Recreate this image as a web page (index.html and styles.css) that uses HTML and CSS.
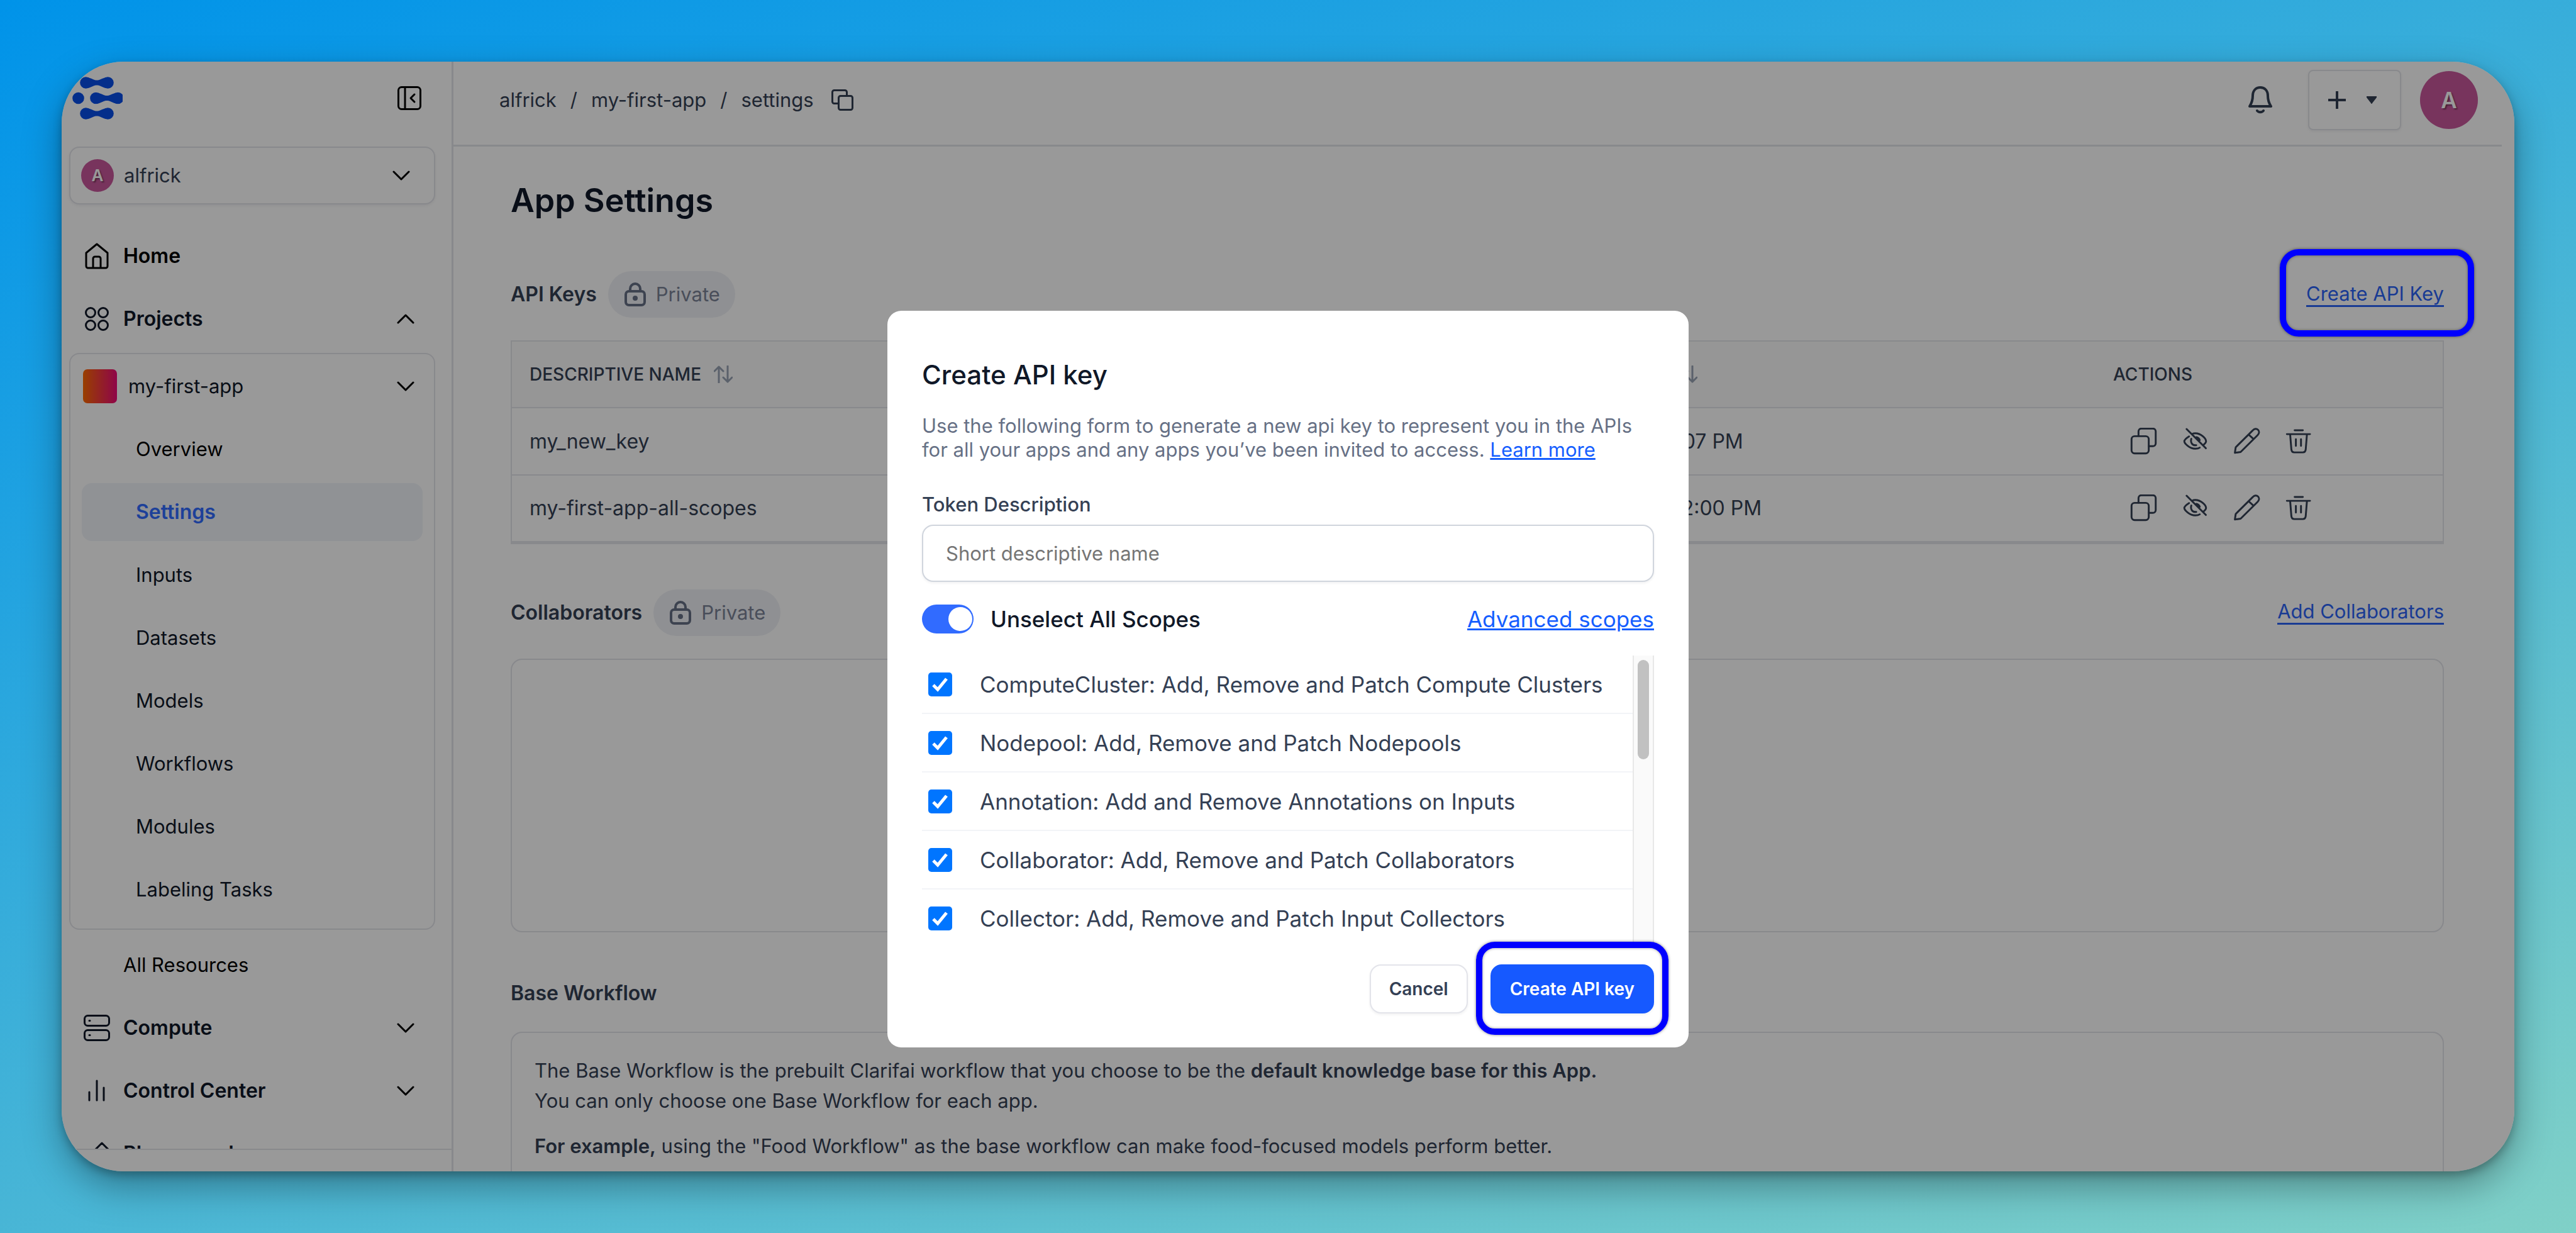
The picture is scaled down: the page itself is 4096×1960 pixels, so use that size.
FILE: index.html
```html
<!DOCTYPE html>
<html lang="en">
<head>
<meta charset="utf-8">
<meta name="viewport" content="width=device-width, initial-scale=1">
<title>App Settings</title>
<link rel="stylesheet" href="styles.css">
</head>
<body>
<svg class="sprite" aria-hidden="true">
  <symbol id="i-down" viewBox="0 0 28 16"><path d="M2 2l12 12L26 2"/></symbol>
  <symbol id="i-up" viewBox="0 0 28 16"><path d="M2 14L14 2l12 12"/></symbol>
  <symbol id="i-lock" viewBox="0 0 34 40"><rect x="2" y="15" width="30" height="22" rx="5"/><path d="M9 14v-3a8 8 0 0 1 16 0v3"/><circle cx="17" cy="26" r="2"/></symbol>
  <symbol id="i-sort" viewBox="0 0 30 28"><path d="M8 27V2M1 9l7-7 7 7M22 1v25M15 19l7 7 7-7"/></symbol>
  <symbol id="i-copy" viewBox="0 0 132 132"><rect x="7" y="41" width="84" height="84" rx="15"/><path d="M41 40V18a14 14 0 0 1 14-14h56a14 14 0 0 1 14 14v58a14 14 0 0 1-14 14H92"/></symbol>
  <symbol id="i-hide" viewBox="0 0 132 132"><path d="M24 6l94 94M36 42C20 52 13 61 13 66c0 10 25 36 53 36 8 0 16-1 22-5M52 30c4-2 8-3 14-3 30 0 53 27 53 39 0 6-7 13-13 18M47 54c-5 17 4 34 24 31M72 46c8 2 14 8 16 14"/></symbol>
  <symbol id="i-edit" viewBox="0 0 132 132"><path d="M8 122l4-27L96 12c7-8 18-9 25-2s6 18-2 26L36 118zM75 33l24 22"/></symbol>
  <symbol id="i-trash" viewBox="0 0 132 132"><path d="M48 12h40M10 31h113M26 32l6 74c1 8 6 14 14 14h42c8 0 13-6 14-14l6-74M54 56v32M79 56v32"/></symbol>
  <symbol id="i-dumbbell" viewBox="0 0 54 19"><circle cx="9.500" cy="9.500" r="9.300"/><circle cx="44.500" cy="9.500" r="9.300"/><path d="M13 .9c8 2.600 9.500 4.600 14 4.600s6-2 14-4.600v17.200c-8-2.600-9.500-4.600-14-4.600s-6 2-14 4.600z"/></symbol>
</svg>

<div class="window">
  <aside class="sidebar">
    <div class="sidebar-head">
      <svg class="logo" viewBox="0 0 80 68" role="img" aria-label="Clarifai">
        <use href="#i-dumbbell" x="12" y="0" width="54" height="19"/>
        <circle cx="9.500" cy="34" r="9.300"/>
        <use href="#i-dumbbell" x="28" y="24.500" width="54" height="19"/>
        <use href="#i-dumbbell" x="12" y="49" width="54" height="19"/>
      </svg>
      <button class="plain" type="button" aria-label="Collapse sidebar">
        <svg class="collapse" viewBox="0 0 38 38"><rect x="1.500" y="1.500" width="35" height="35" rx="5"/><path d="M12 2v34M27 13l-6 6 6 6"/></svg>
      </button>
    </div>
    <button class="account" type="button">
      <span class="avatar avatar-small">A</span>
      <span class="grow">alfrick</span>
      <svg class="chevron"><use href="#i-down"/></svg>
    </button>
    <nav class="nav">
      <a class="nav-row strong black" href="#">
        <svg class="nav-icon" viewBox="0 0 42 42"><path d="M21 2L4 16v21a3 3 0 0 0 3 3h28a3 3 0 0 0 3-3V16zM15 40V25a3 3 0 0 1 3-3h6a3 3 0 0 1 3 3v15"/></svg>
        <span class="grow">Home</span>
      </a>
      <a class="nav-row strong" href="#">
        <svg class="nav-icon" viewBox="0 0 42 42"><circle cx="11" cy="11" r="7.500"/><circle cx="31" cy="11" r="7.500"/><circle cx="11" cy="31" r="7.500"/><circle cx="31" cy="31" r="7.500"/></svg>
        <span class="grow">Projects</span>
        <svg class="chevron"><use href="#i-up"/></svg>
      </a>
      <div class="group">
        <a class="group-head" href="#">
          <span class="swatch"></span>
          <span class="grow">my-first-app</span>
          <svg class="chevron"><use href="#i-down"/></svg>
        </a>
        <a class="sub black" href="#">Overview</a>
        <a class="sub active" href="#" aria-current="page">Settings</a>
        <a class="sub" href="#">Inputs</a>
        <a class="sub" href="#">Datasets</a>
        <a class="sub" href="#">Models</a>
        <a class="sub" href="#">Workflows</a>
        <a class="sub" href="#">Modules</a>
        <a class="sub" href="#">Labeling Tasks</a>
      </div>
      <a class="nav-row indent black" href="#">All Resources</a>
      <a class="nav-row strong" href="#">
        <svg class="nav-icon" viewBox="0 0 42 42"><rect x="1.500" y="1.500" width="39" height="16" rx="5"/><rect x="1.500" y="24.500" width="39" height="16" rx="5"/><path d="M9 9.500h1M9 32.500h1"/></svg>
        <span class="grow">Compute</span>
        <svg class="chevron"><use href="#i-down"/></svg>
      </a>
      <a class="nav-row strong" href="#">
        <svg class="nav-icon" viewBox="0 0 42 42"><path d="M9 23v13M21 5v31M32 16v20"/></svg>
        <span class="grow">Control Center</span>
        <svg class="chevron"><use href="#i-down"/></svg>
      </a>
      <a class="nav-row strong" href="#">
        <svg class="nav-icon" viewBox="0 0 42 42"><path d="M29 4L16 17v20h26V17z"/></svg>
        <span class="grow">Playground</span>
      </a>
    </nav>
    <div class="sidebar-foot"></div>
  </aside>

  <div class="main">
    <header class="topbar">
      <nav class="crumbs" aria-label="Breadcrumb">
        <a href="#">alfrick</a><span>/</span><a href="#">my-first-app</a><span>/</span><a href="#">settings</a>
        <button class="plain" type="button" aria-label="Copy path">
          <svg class="crumb-copy" viewBox="0 0 36 34"><rect x="11.500" y="10.500" width="22" height="22" rx="3"/><path d="M11 22.500H4.500a3 3 0 0 1-3-3v-15a3 3 0 0 1 3-3h17a3 3 0 0 1 3 3V10"/></svg>
        </button>
      </nav>
      <div class="tools">
        <button class="plain" type="button" aria-label="Notifications">
          <svg class="bell" viewBox="0 0 38 44"><path d="M2 32C6 26 7 20 7 15 7 7 12 2 19 2s12 5 12 13c0 5 1 11 5 17zM14 39c2 3 8 3 10 0"/></svg>
        </button>
        <button class="add" type="button" aria-label="Create new">
          <svg class="plus" viewBox="0 0 28 28"><path d="M14 0v28M0 14h28"/></svg>
          <svg class="caret" viewBox="0 0 16 12"><path d="M1 0h14a1 1 0 0 1 1 2L9 11a1 1 0 0 1-2 0L0 2a1 1 0 0 1 1-2z"/></svg>
        </button>
        <button class="avatar avatar-large" type="button" aria-label="Account">A</button>
      </div>
    </header>

    <main class="content">
      <h1>App Settings</h1>

      <section>
        <div class="section-head">
          <h2>API Keys</h2>
          <span class="pill"><svg class="lock"><use href="#i-lock"/></svg>Private</span>
          <span class="link-wrap"><a class="link" href="#">Create API Key</a><span class="marker marker-link"></span></span>
        </div>
        <table class="keys">
          <colgroup><col class="c-name"><col class="c-key"><col class="c-time"><col class="c-actions"></colgroup>
          <thead>
            <tr>
              <th scope="col">DESCRIPTIVE NAME<svg class="sort"><use href="#i-sort"/></svg></th>
              <th scope="col" aria-label="Key"></th>
              <th scope="col" aria-label="Created at"><svg class="sort sort-only"><use href="#i-sort"/></svg></th>
              <th scope="col">ACTIONS</th>
            </tr>
          </thead>
          <tbody>
            <tr>
              <td>my_new_key</td><td></td><td>1:07 PM</td>
              <td><div class="actions">
                <button class="plain" type="button" aria-label="Copy"><svg><use href="#i-copy"/></svg></button>
                <button class="plain" type="button" aria-label="Hide"><svg><use href="#i-hide"/></svg></button>
                <button class="plain" type="button" aria-label="Edit"><svg><use href="#i-edit"/></svg></button>
                <button class="plain" type="button" aria-label="Delete"><svg><use href="#i-trash"/></svg></button>
              </div></td>
            </tr>
            <tr>
              <td>my-first-app-all-scopes</td><td></td><td>02:00 PM</td>
              <td><div class="actions">
                <button class="plain" type="button" aria-label="Copy"><svg><use href="#i-copy"/></svg></button>
                <button class="plain" type="button" aria-label="Hide"><svg><use href="#i-hide"/></svg></button>
                <button class="plain" type="button" aria-label="Edit"><svg><use href="#i-edit"/></svg></button>
                <button class="plain" type="button" aria-label="Delete"><svg><use href="#i-trash"/></svg></button>
              </div></td>
            </tr>
          </tbody>
        </table>
      </section>

      <section>
        <div class="section-head">
          <h2>Collaborators</h2>
          <span class="pill"><svg class="lock"><use href="#i-lock"/></svg>Private</span>
          <span class="link-wrap"><a class="link" href="#">Add Collaborators</a></span>
        </div>
        <div class="card card-empty"></div>
      </section>

      <section>
        <div class="section-head"><h2>Base Workflow</h2></div>
        <div class="card card-text">
          <p>The Base Workflow is the prebuilt Clarifai workflow that you choose to be the <b>default knowledge base for this App.</b><br>You can only choose one Base Workflow for each app.</p>
          <p><b>For example,</b> using the "Food Workflow" as the base workflow can make food-focused models perform better.</p>
        </div>
      </section>
    </main>
  </div>

  <div class="overlay">
    <form class="modal" role="dialog" aria-modal="true" aria-labelledby="modal-title">
      <h2 id="modal-title">Create API key</h2>
      <p class="modal-text">Use the following form to generate a new api key to represent you in the APIs for all your apps and any apps you’ve been invited to access. <a href="#">Learn more</a></p>
      <label class="field-label" for="desc">Token Description</label>
      <input class="field" id="desc" type="text" placeholder="Short descriptive name">
      <div class="scope-head">
        <input class="switch" id="all" type="checkbox" role="switch" checked>
        <label class="grow" for="all">Unselect All Scopes</label>
        <a href="#">Advanced scopes</a>
      </div>
      <div class="scopes">
        <ul class="scope-list">
          <li><label><input class="check" type="checkbox" checked>ComputeCluster: Add, Remove and Patch Compute Clusters</label></li>
          <li><label><input class="check" type="checkbox" checked>Nodepool: Add, Remove and Patch Nodepools</label></li>
          <li><label><input class="check" type="checkbox" checked>Annotation: Add and Remove Annotations on Inputs</label></li>
          <li><label><input class="check" type="checkbox" checked>Collaborator: Add, Remove and Patch Collaborators</label></li>
          <li><label><input class="check" type="checkbox" checked>Collector: Add, Remove and Patch Input Collectors</label></li>
        </ul>
        <div class="track"><div class="thumb"></div></div>
      </div>
      <div class="modal-foot">
        <button class="btn btn-light" type="button">Cancel</button>
        <span class="btn-wrap"><button class="btn btn-blue" type="submit">Create API key</button><span class="marker marker-btn"></span></span>
      </div>
    </form>
  </div>
</div>
</body>
</html>
```
FILE: styles.css
```css
:root {
  --line: #e3e4ea;
  --ink: #344054;
  --dark: #101828;
  --blue: #155eff;
}

* { box-sizing: border-box; }

body {
  margin: 0;
  padding: 98px;
  min-height: 100vh;
  font: 400 31px/36px Inter, "Liberation Sans", sans-serif;
  color: var(--ink);
  background: linear-gradient(160deg, #0093e9 0%, #80d0c7 100%);
}

h1, h2, p, ul { margin: 0; padding: 0; }
ul { list-style: none; }
a { color: inherit; text-decoration: none; }
button, input { font: inherit; color: inherit; margin: 0; }
button { cursor: pointer; }
svg { display: block; flex: none; fill: none; stroke: currentColor; stroke-width: 3; stroke-linecap: round; stroke-linejoin: round; }

.sprite { position: absolute; width: 0; height: 0; }
.plain { padding: 0; border: 0; background: none; }
.grow { flex: 1; text-align: left; }
.black { color: #000; }

.window {
  position: relative;
  display: flex;
  height: calc(100vh - 196px);
  overflow: hidden;
  background: #fff;
  border-radius: 98px;
  box-shadow: 0 24px 60px rgba(0, 0, 0, .34), 0 6px 14px rgba(0, 0, 0, .25);
}

/* Sidebar */
.sidebar {
  flex: none;
  width: 623px;
  display: flex;
  flex-direction: column;
  padding-left: 12px;
  border-right: 3px solid var(--line);
}
.sidebar-head {
  display: flex;
  justify-content: space-between;
  align-items: center;
  padding: 24px 48px 0 5px;
  margin-bottom: 43px;
}
.logo { width: 80px; height: 68px; fill: #074ee8; stroke: none; }
.collapse { width: 38px; height: 38px; color: #000; }
.account {
  flex: none;
  display: flex;
  align-items: center;
  gap: 16px;
  height: 92px;
  margin: 0 26px 36px 0;
  padding: 0 38px 0 17px;
  border: 2px solid var(--line);
  border-radius: 16px;
  background: #fff;
  box-shadow: 0 2px 4px rgba(16, 24, 40, .06);
}
.avatar {
  display: flex;
  align-items: center;
  justify-content: center;
  padding: 0;
  border: 0;
  border-radius: 50%;
  color: #fff;
  background: #c8579b;
  font-weight: 600;
  text-shadow: 2px 2px 2px rgba(0, 0, 0, .4);
}
.avatar-small { width: 52px; height: 52px; font-size: 26px; }
.avatar-large { width: 92px; height: 92px; font-size: 35px; }
.chevron { width: 28px; height: 16px; color: #000; }

.nav { flex: 1; min-height: 0; overflow: hidden; padding-right: 26px; color: var(--dark); }
.nav-row {
  display: flex;
  align-items: center;
  gap: 21px;
  height: 92px;
  margin-bottom: 8px;
  padding: 0 33px 0 23px;
}
.strong { font-size: 32px; font-weight: 600; }
.nav-icon { width: 42px; height: 42px; }
.indent { padding-left: 86px; }
.group { margin-bottom: 10px; padding: 5px 18px 8px; border: 2px solid var(--line); border-radius: 16px; }
.group-head { display: flex; align-items: center; gap: 18px; height: 92px; margin-bottom: 8px; padding: 0 13px 0 2px; }
.swatch { width: 54px; height: 54px; border-radius: 7px; background: linear-gradient(90deg, #ff6a00, #ee0979); }
.sub { display: block; height: 92px; margin-bottom: 8px; padding-left: 86px; line-height: 92px; border-radius: 16px; }
.active { font-size: 32px; color: #316bff; background: #f0f3f9; font-weight: 600; }
.sidebar-foot { flex: none; height: 36px; margin-left: -12px; border-top: 2px solid var(--line); }

/* Main column */
.main { flex: 1; min-width: 0; }
.topbar {
  display: flex;
  justify-content: space-between;
  margin-right: 20px;
  padding: 13px 38px 23px 73px;
  border-bottom: 3px solid var(--line);
}
.crumbs, .tools { display: flex; align-items: center; gap: 22px; }
.crumb-copy { width: 36px; height: 34px; margin-left: 6px; }
.bell { width: 38px; height: 44px; margin-right: 35px; stroke-width: 4; }
.add {
  display: flex;
  align-items: center;
  gap: 33px;
  height: 96px;
  margin-right: 8px;
  padding: 0 37px 0 30px;
  border: 2px solid var(--line);
  border-radius: 8px;
  background: #fff;
  box-shadow: 0 2px 4px rgba(16, 24, 40, .06);
}
.plus { width: 28px; height: 28px; stroke-width: 4; stroke-linecap: butt; }
.caret { width: 16px; height: 12px; fill: currentColor; stroke: none; }

.content { padding: 56px 112px 0 91px; }
h1 { margin-bottom: 82px; font-size: 52px; line-height: 60px; font-weight: 600; color: var(--dark); }
section { margin-bottom: 72px; }
.section-head { display: flex; align-items: center; gap: 18px; min-height: 50px; margin-bottom: 36px; }
.section-head h2 { font-size: 32px; font-weight: 600; }
.pill {
  display: flex;
  align-items: center;
  gap: 16px;
  height: 74px;
  padding: 0 24px 0 26px;
  border-radius: 37px;
  background: #eff1f5;
  color: #7b8296;
}
.lock { width: 34px; height: 40px; color: #667085; stroke-width: 4; }
.link-wrap { position: relative; margin-left: auto; }
.link { display: block; color: #2b63f6; border-bottom: 3px solid; }
.marker { position: absolute; z-index: 3; border: 10px solid #00f; border-radius: 30px; box-shadow: 0 0 4px rgba(0, 0, 0, .5), inset 0 0 4px rgba(0, 0, 0, .4); pointer-events: none; }
.marker-link { inset: -53px -48px -47px -42px; }
.marker-btn { inset: -36px -23px -34px; }

.keys { width: 100%; table-layout: fixed; border-collapse: collapse; border: 2px solid var(--line); border-bottom-width: 5px; }
.keys th, .keys td { padding: 0 28px; text-align: left; border-bottom: 2px solid var(--line); white-space: nowrap; }
.keys tbody tr:last-child td { border-bottom-width: 5px; }
.keys th { height: 106px; font-size: 28px; font-weight: 500; background: #fafafa; }
.keys td { height: 107px; font-size: 32px; }
.c-name { width: 30%; }
.c-key { width: 29%; }
.c-time { width: 23%; }
.c-actions { width: 18%; }
.sort { display: inline-block; width: 30px; height: 28px; margin-left: 20px; vertical-align: -4px; color: #98a2b3; }
.sort-only { margin-left: 16px; }
.actions { display: flex; gap: 39px; padding-left: 27px; }
.actions svg { width: 43px; height: 43px; stroke-width: 9; }
.card { border: 2px solid var(--line); border-radius: 18px; }
.card-empty { height: 435px; }
.card-text { display: grid; gap: 24px; padding: 36px 36px 60px; line-height: 48px; }
.card-text b { font-weight: 600; }

/* Dialog */
.overlay {
  position: absolute;
  inset: 0;
  z-index: 1;
  display: flex;
  justify-content: center;
  align-items: flex-start;
  padding-top: 396px;
  background: rgba(0, 0, 0, .4);
}
.modal { width: 1274px; padding: 76px 55px 54px; border-radius: 22px; background: #fff; }
.modal h2 { margin-bottom: 36px; font-size: 42px; line-height: 52px; font-weight: 500; color: var(--dark); }
.modal-text { margin-bottom: 50px; line-height: 38px; color: #667085; }
.modal a { color: var(--blue); text-decoration: underline; }
.field-label { display: block; margin-bottom: 14px; font-weight: 500; }
.field {
  display: block;
  width: 100%;
  height: 91px;
  margin-bottom: 36px;
  padding: 0 36px;
  border: 2px solid #d0d5dd;
  border-radius: 18px;
  background: #fff;
  box-shadow: 0 2px 4px rgba(16, 24, 40, .06);
}
.field::placeholder { color: #757575; }
.scope-head { display: flex; align-items: center; margin-bottom: 35px; font-size: 35px; line-height: 46px; }
.scope-head label { font-weight: 500; color: var(--dark); }
.switch { appearance: none; width: 82px; height: 46px; margin-right: 27px; padding: 4px 2px 4px 42px; border-radius: 23px; background: #316bff; }
.switch::before { content: ""; display: block; width: 38px; height: 38px; border-radius: 50%; background: #fff; }
.scopes { display: flex; height: 457px; margin-bottom: 34px; overflow: hidden; }
.scope-list { flex: 1; font-size: 35px; }
.scope-list li { border-bottom: 2px solid #f2f4f7; }
.scope-list label { display: flex; align-items: center; gap: 44px; height: 91px; padding-left: 10px; }
.check {
  appearance: none;
  width: 38px;
  height: 38px;
  border-radius: 5px;
  background: #0075ff url("data:image/svg+xml,%3Csvg xmlns='http://www.w3.org/2000/svg' viewBox='0 0 38 38'%3E%3Cpath d='M8 20l7 7L29 10' fill='none' stroke='%23fff' stroke-width='5'/%3E%3C/svg%3E");
}
.track { width: 34px; padding: 7px 6px; background: #fafafa; border: solid #e8e8e8; border-width: 0 2px; }
.thumb { height: 158px; border-radius: 9px; background: #c1c1c1; }
.modal-foot { display: flex; justify-content: flex-end; gap: 36px; }
.btn-wrap { position: relative; }
.btn { height: 78px; padding: 0 29px; border: 2px solid var(--line); border-radius: 18px; background: #fff; font-size: 28px; font-weight: 600; box-shadow: 0 2px 4px rgba(16, 24, 40, .06); }
.btn-blue { color: #fff; background: #1659ff; border-color: #1659ff; }
```
